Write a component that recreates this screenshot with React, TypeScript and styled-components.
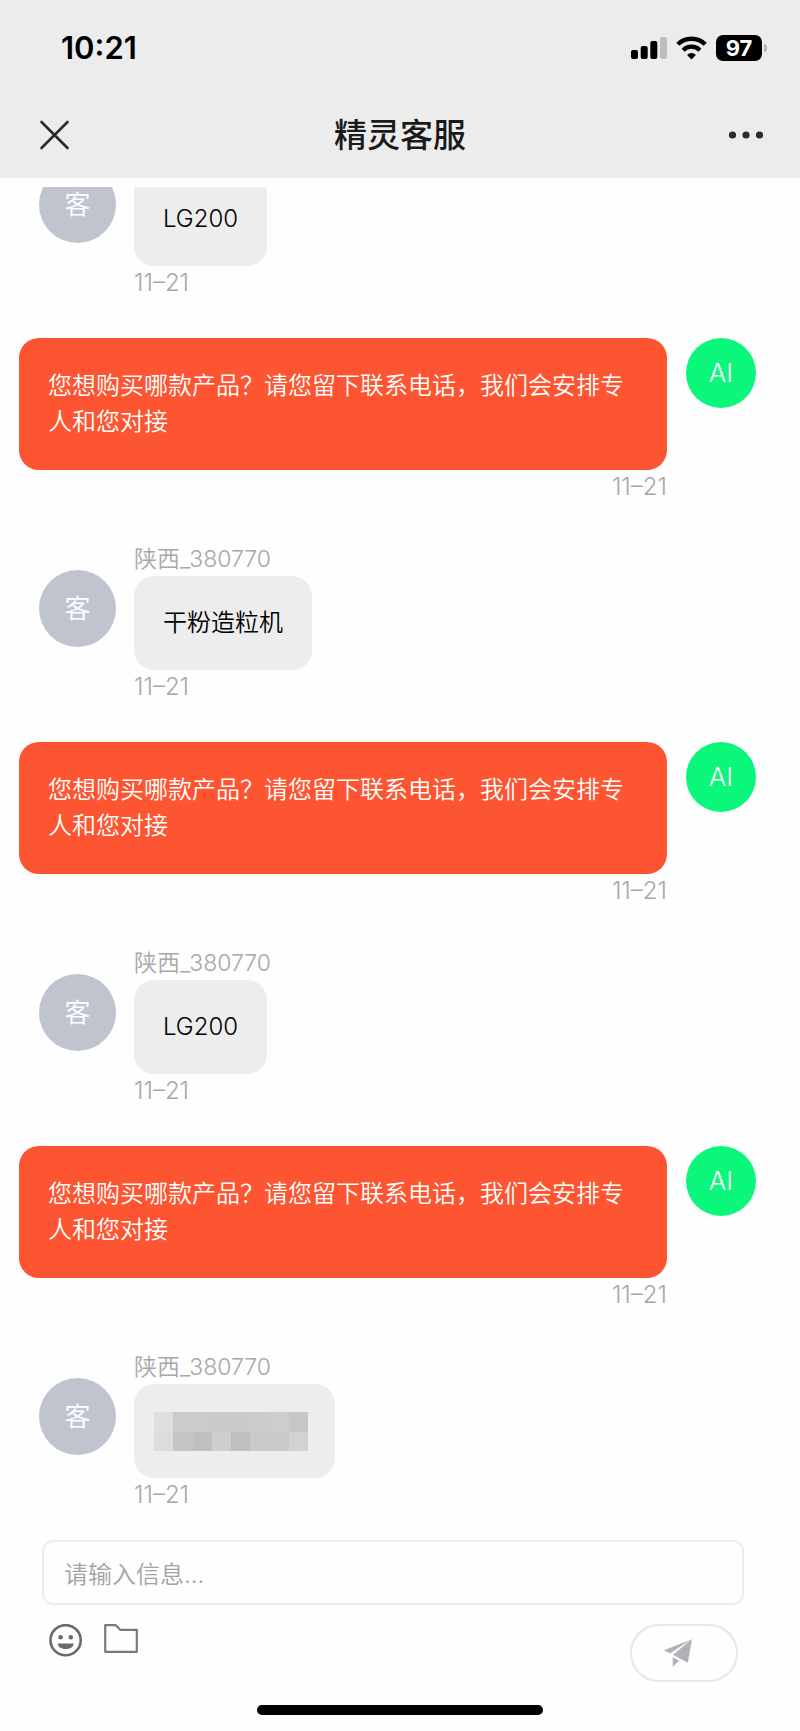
import React from "react";
import styled, { createGlobalStyle } from "styled-components";

const GlobalStyle = createGlobalStyle`
  * { box-sizing: border-box; }
  body {
    margin: 0;
    background: #fefefe;
    font-family: Inter, "Noto Sans CJK SC", sans-serif;
  }
  button { padding: 0; border: 0; background: none; cursor: pointer; font: inherit; }
  svg { display: block; }
`;

const Page = styled.div`
  display: flex;
  flex-direction: column;
  height: 100vh;
  background: #fefefe;
`;

const Header = styled.header`
  flex: none;
  padding-bottom: 4px;
  background: #ececec;
`;

const StatusBar = styled.div`
  display: flex;
  align-items: center;
  justify-content: space-between;
  height: 96px;
  padding: 0 33px 0 61px;
`;

const Clock = styled.time`
  font-size: 31px;
  font-weight: 600;
  line-height: 36px;
  color: #000;
`;

const StatusIcons = styled.div`
  display: flex;
  align-items: center;
  gap: 9px;
`;

const Battery = styled.div`
  display: flex;
  align-items: center;
  gap: 2px;
`;

const BatteryLevel = styled.span`
  width: 46px;
  height: 26px;
  border-radius: 7px;
  background: #000;
  color: #fff;
  font-size: 22px;
  font-weight: 700;
  line-height: 26px;
  text-align: center;
`;

const BatteryCap = styled.span`
  width: 3px;
  height: 8px;
  border-radius: 0 4px 4px 0;
  background: #b4b4b4;
`;

const NavBar = styled.nav`
  display: grid;
  grid-template-columns: 1fr auto 1fr;
  align-items: center;
  height: 78px;
  padding: 0 36px;
`;

const Title = styled.h1`
  margin: 0;
  font-size: 33px;
  font-weight: 500;
  line-height: 44px;
  color: #1a1a1a;
`;

const NavButton = styled.button<{ $end?: boolean }>`
  justify-self: ${(p) => (p.$end ? "end" : "start")};
`;

/* Reversed column keeps the newest message in view. */
const Chat = styled.main`
  display: flex;
  flex-direction: column-reverse;
  flex: 1;
  min-height: 0;
  margin-top: 9px;
  overflow-y: auto;
  scrollbar-width: none;
`;

const MessageList = styled.ul`
  display: flex;
  flex-direction: column;
  gap: 38px;
  margin: 0;
  padding: 0;
  list-style: none;
`;

const GuestRow = styled.li`
  display: flex;
  align-items: flex-start;
  gap: 18px;
  padding: 0 39px;
`;

const AgentRow = styled.li`
  display: flex;
  align-items: flex-start;
  gap: 19px;
  padding: 0 44px 0 19px;
`;

const Column = styled.div<{ $end?: boolean }>`
  display: flex;
  flex-direction: column;
  align-items: ${(p) => (p.$end ? "flex-end" : "flex-start")};
  flex: ${(p) => (p.$end ? "1" : "none")};
`;

/* The avatar starts 6px above the bubble, with or without a name line. */
const GuestAvatar = styled.span<{ $named: boolean }>`
  flex: none;
  width: 77px;
  height: 77px;
  margin-top: ${(p) => (p.$named ? "28px" : "-6px")};
  border-radius: 50%;
  background: #bfc4cf;
  color: #fff;
  font-size: 26px;
  font-weight: 350;
  line-height: 77px;
  text-align: center;
`;

const AgentAvatar = styled.span`
  flex: none;
  width: 70px;
  height: 70px;
  border-radius: 50%;
  background: #0af77b;
  color: #fff;
  font-size: 26px;
  font-weight: 300;
  line-height: 70px;
  text-align: center;
`;

const Meta = styled.span`
  font-size: 23px;
  font-weight: 350;
  line-height: 34px;
  color: #a8a8a8;
`;

const Stamp = styled(Meta)`
  font-size: 24px;
  font-weight: 300;
`;

const GuestBubble = styled.div<{ $masked?: boolean }>`
  display: flex;
  align-items: center;
  height: 94px;
  padding: ${(p) => (p.$masked ? "0 27px 0 20px" : "0 29px")};
  border-radius: 20px;
  background: #ededed;
  color: #000;
  font-size: 24px;
  font-weight: 350;
  line-height: 36px;
`;

const AgentBubble = styled.div`
  width: 100%;
  padding: 30px 29px;
  border-radius: 20px;
  background: #fd5532;
  color: #fff;
  font-size: 24px;
  font-weight: 350;
  line-height: 36px;
`;

const Footer = styled.footer`
  flex: none;
`;

const Composer = styled.form`
  padding: 28px 56px 23px 42px;
`;

const MessageInput = styled.input`
  display: block;
  width: 100%;
  height: 65px;
  padding: 4px 20px 0;
  border: 2px solid #ededed;
  border-radius: 11px;
  background: transparent;
  color: #000;
  font-family: inherit;
  font-size: 24px;
  font-weight: 350;
  outline: none;
  &::placeholder { color: #a3a3a3; opacity: 1; }
`;

const Tools = styled.div`
  display: flex;
  align-items: flex-start;
  gap: 20px;
  margin-top: 19px;
  padding: 0 6px;
`;

const SendButton = styled.button`
  display: flex;
  align-items: center;
  justify-content: center;
  width: 108px;
  height: 58px;
  margin-left: auto;
  padding-right: 12px;
  border: 2px solid #e6e7ea;
  border-radius: 29px;
`;

const HomeIndicator = styled.div`
  width: 286px;
  height: 10px;
  margin: 0 auto 16px;
  border-radius: 5px;
  background: #000;
`;

const SignalIcon = () => (
  <svg width="36" height="24" viewBox="0 0 36 24" aria-hidden="true">
    <rect x="0" y="14" width="7" height="9" rx="2" />
    <rect x="9.7" y="10" width="7" height="13" rx="2" />
    <rect x="19.3" y="5" width="7" height="18" rx="2" />
    <rect x="29" y="1" width="7" height="22" rx="2" fill="#bdbdbd" />
  </svg>
);

const WifiIcon = () => (
  <svg width="31" height="24" viewBox="0 0 31 24" aria-hidden="true">
    <path d="M1.800 8.300a19.500 19.500 0 0 1 27.400 0" fill="none" stroke="#000" strokeWidth="4.400" />
    <path d="M7.100 14.200a11.800 11.800 0 0 1 16.800 0" fill="none" stroke="#000" strokeWidth="4.200" />
    <path d="M15.500 23.400l-4.400-4.500a6.300 6.300 0 0 1 8.800 0z" />
  </svg>
);

const CloseIcon = () => (
  <svg width="36" height="36" viewBox="0 0 36 36" aria-hidden="true">
    <path d="M5.500 5l26 26M31.500 5l-26 26" fill="none" stroke="#2b2b2b" strokeWidth="2.600" strokeLinecap="round" />
  </svg>
);

const MoreIcon = () => (
  <svg width="36" height="36" viewBox="0 0 36 36" aria-hidden="true" fill="#2b2b2b">
    <circle cx="4.500" cy="18" r="3.600" />
    <circle cx="18" cy="18" r="3.600" />
    <circle cx="31.500" cy="18" r="3.600" />
  </svg>
);

const SmileIcon = () => (
  <svg width="36" height="34" viewBox="0 0 36 34" aria-hidden="true" fill="#6b6b6b">
    <circle cx="17.600" cy="16.200" r="15.100" fill="none" stroke="#6b6b6b" strokeWidth="2.600" />
    <circle cx="12.600" cy="13.200" r="2.300" />
    <circle cx="22.800" cy="13.200" r="2.300" />
    <path d="M9.600 19.500h16.200c-.6 3.800-4 5.600-8.100 5.600s-7.500-1.800-8.100-5.600z" />
  </svg>
);

const FolderIcon = () => (
  <svg width="34" height="34" viewBox="0 0 34 34" aria-hidden="true">
    <path d="M1.200 1.200h10.600l4.400 4.600h16.600v22H1.200z" fill="none" stroke="#7a7a7a" strokeWidth="2.200" strokeLinejoin="round" />
  </svg>
);

const PlaneIcon = () => (
  <svg width="28" height="28" viewBox="0 0 28 28" aria-hidden="true" fill="#b0b1b7">
    <path d="M27 .6L0 11.200l6 3.200z" />
    <path d="M28 0L9 15.800l14.800 8z" />
    <path d="M8.700 18.200l6.400 3.500-6.400 6z" />
  </svg>
);

const MASK_ROWS = [
  ["#dfdfdf", "#cbcbcb", "#cbcbcb", "#cacaca", "#cacaca", "#cccccc", "#cecece", "#c7c7c7"],
  ["#dddddd", "#c5c5c5", "#bfbfbf", "#cecece", "#c0c0c0", "#cacaca", "#cacaca", "#d2d2d2"],
];

const MaskedText = () => (
  <svg width="154" height="39" viewBox="0 0 160 40" preserveAspectRatio="none" shapeRendering="crispEdges" aria-hidden="true">
    {MASK_ROWS.map((row, y) =>
      row.map((fill, x) => <rect key={`${x}-${y}`} x={x * 20} y={y * 20} width="20" height="20" fill={fill} />)
    )}
  </svg>
);

type Message = { from: "guest" | "agent"; name?: string; text?: string };

const GUEST = "陕西_380770";
const REPLY = "您想购买哪款产品？请您留下联系电话，我们会安排专人和您对接";

const MESSAGES: Message[] = [
  { from: "guest", text: "LG200" },
  { from: "agent", text: REPLY },
  { from: "guest", name: GUEST, text: "干粉造粒机" },
  { from: "agent", text: REPLY },
  { from: "guest", name: GUEST, text: "LG200" },
  { from: "agent", text: REPLY },
  { from: "guest", name: GUEST },
];

const MessageItem = ({ from, name, text }: Message) =>
  from === "guest" ? (
    <GuestRow>
      <GuestAvatar $named={!!name}>客</GuestAvatar>
      <Column>
        {name && <Meta>{name}</Meta>}
        <GuestBubble $masked={!text}>{text ?? <MaskedText />}</GuestBubble>
        <Stamp>11–21</Stamp>
      </Column>
    </GuestRow>
  ) : (
    <AgentRow>
      <Column $end>
        <AgentBubble>{text}</AgentBubble>
        <Stamp>11–21</Stamp>
      </Column>
      <AgentAvatar>AI</AgentAvatar>
    </AgentRow>
  );

export default function App() {
  return (
    <Page lang="zh-CN">
      <GlobalStyle />
      <Header>
        <StatusBar>
          <Clock>10:21</Clock>
          <StatusIcons>
            <SignalIcon />
            <WifiIcon />
            <Battery>
              <BatteryLevel>97</BatteryLevel>
              <BatteryCap />
            </Battery>
          </StatusIcons>
        </StatusBar>
        <NavBar>
          <NavButton type="button" aria-label="关闭"><CloseIcon /></NavButton>
          <Title>精灵客服</Title>
          <NavButton type="button" aria-label="更多" $end><MoreIcon /></NavButton>
        </NavBar>
      </Header>
      <Chat>
        <MessageList>
          {MESSAGES.map((m, i) => <MessageItem key={i} {...m} />)}
        </MessageList>
      </Chat>
      <Footer>
        <Composer onSubmit={(e) => e.preventDefault()}>
          <MessageInput type="text" aria-label="请输入信息" placeholder="请输入信息..." />
          <Tools>
            <button type="button" aria-label="表情"><SmileIcon /></button>
            <button type="button" aria-label="文件"><FolderIcon /></button>
            <SendButton type="submit" aria-label="发送"><PlaneIcon /></SendButton>
          </Tools>
        </Composer>
        <HomeIndicator />
      </Footer>
    </Page>
  );
}
